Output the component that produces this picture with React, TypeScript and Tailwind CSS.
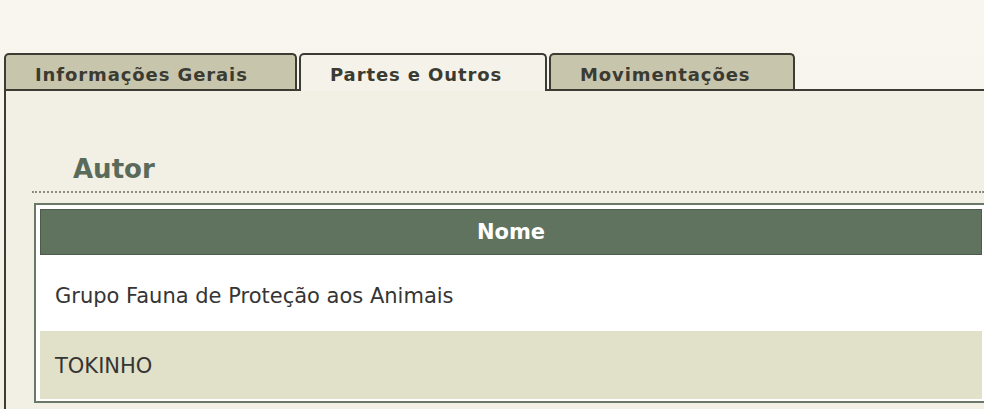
export default function App() {
  const tabs = [
    { label: 'Informações Gerais', width: 'w-[293px]', active: false },
    { label: 'Partes e Outros', width: 'w-[248px]', active: true },
    { label: 'Movimentações', width: 'w-[246px]', active: false },
  ]

  return (
    <div className="w-[984px] h-[409px] overflow-hidden bg-gradient-to-b from-[#f8f6ee] to-[#f2f0e4] font-['DejaVu_Sans','Verdana',sans-serif]">
      <div className="pt-[53px] pl-[4px]">
        {/* Tab strip */}
        <div className="flex items-end gap-[2px] border-b-2 border-[#3c3c34]">
          {tabs.map((tab) =>
            tab.active ? (
              <div
                key={tab.label}
                className={`${tab.width} relative -mb-[2px] h-[38px] pl-[29px] pt-[6px] border-2 border-b-0 border-[#3c3c34] rounded-t-[5px] bg-[#f5f3e9] text-[18px] tracking-[0.9px] font-bold text-[#3b3b32]`}
              >
                {tab.label}
              </div>
            ) : (
              <div
                key={tab.label}
                className={`${tab.width} h-[36px] pl-[29px] pt-[6px] border-2 border-b-0 border-[#3c3c34] rounded-t-[5px] bg-[#c8c5ad] text-[18px] tracking-[0.9px] font-bold text-[#3b3b32]`}
              >
                {tab.label}
              </div>
            )
          )}
        </div>

        {/* Panel */}
        <div className="h-[320px] border-l-2 border-[#3c3c34] bg-[#f2f0e4]">
          <h2 className="pt-[63px] pl-[67px] text-[26px] leading-[30px] font-bold text-[#5a6b5b]">
            Autor
          </h2>
          <div className="mt-[7px] ml-[26px] border-t-2 border-dotted border-[#8e8c80]" />

          {/* Parties table */}
          <div className="mt-[10px] ml-[28px] w-[954px] border-2 border-[#6a7868] bg-white px-[4px] pt-[4px] pb-[2px]">
            <div className="h-[46px] flex items-center justify-center pt-[2px] border border-[#4b5c4b] bg-[#5f735f] text-[21px] font-bold text-white">
              Nome
            </div>
            <div className="h-[76px] flex items-center pl-[15px] pt-[7px] bg-white text-[21px] text-[#353535]">
              Grupo Fauna de Proteção aos Animais
            </div>
            <div className="h-[68px] flex items-center pl-[15px] pt-[3px] bg-[#e1e0c8] text-[21px] text-[#353535]">
              TOKINHO
            </div>
          </div>
        </div>
      </div>
    </div>
  )
}
